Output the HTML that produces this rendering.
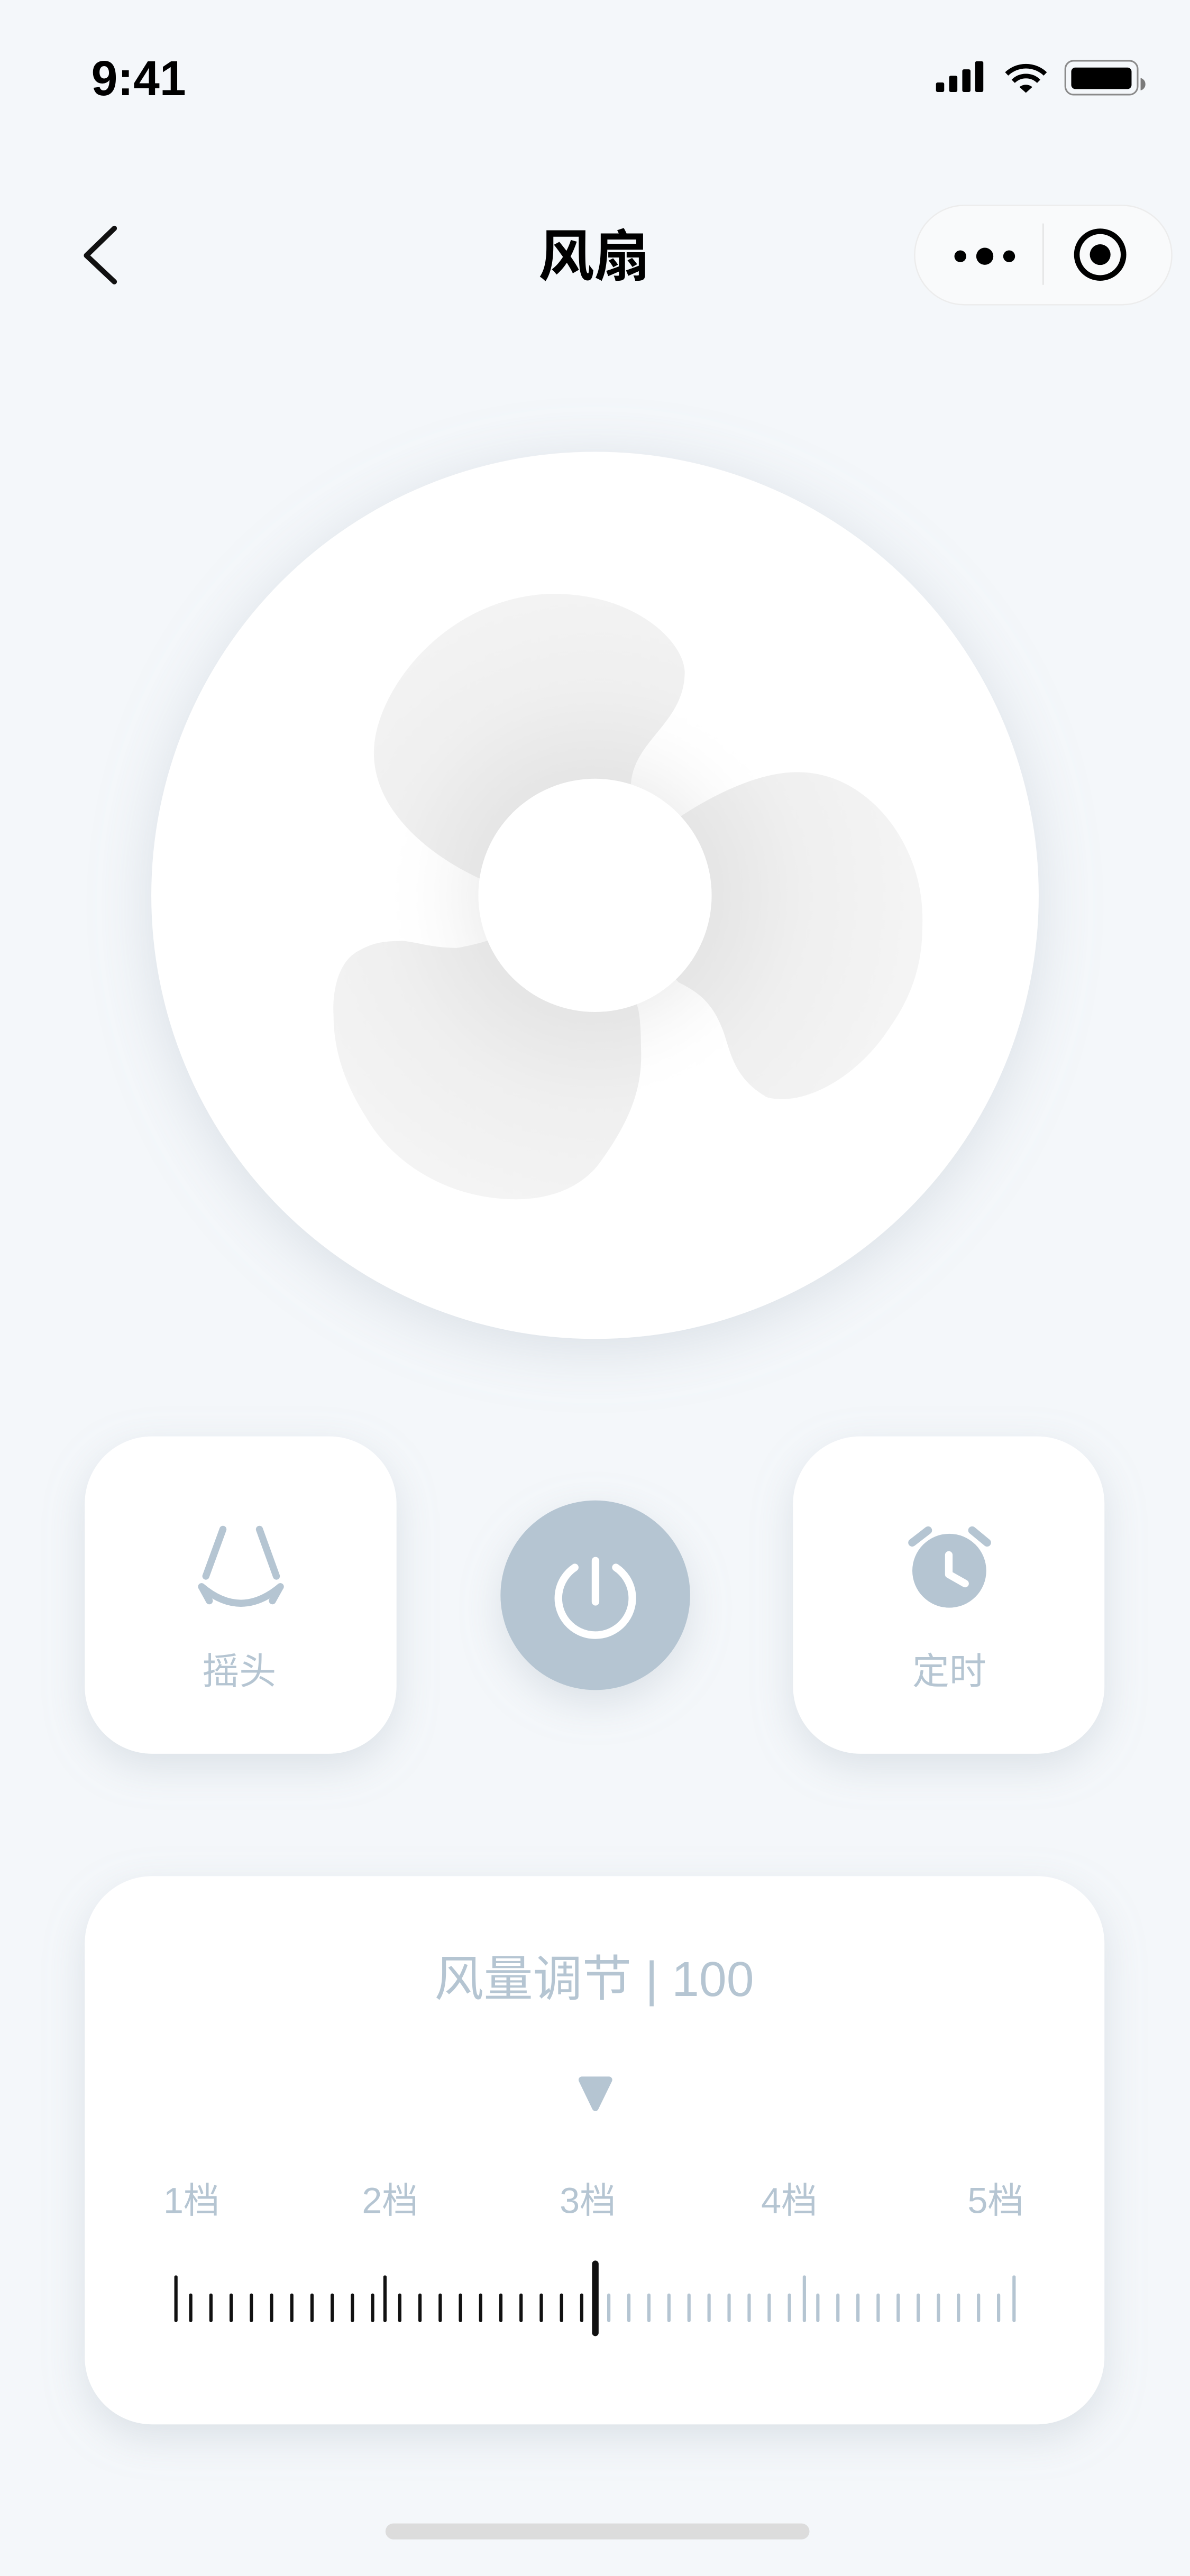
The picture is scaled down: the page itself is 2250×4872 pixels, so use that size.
<!DOCTYPE html>
<html><head><meta charset="utf-8"><style>
html,body{margin:0;padding:0;background:#f4f7fa;}
svg{display:block;}
text{font-family:"Liberation Sans","Noto Sans CJK SC",sans-serif;}
</style></head><body>
<svg width="2250" height="4872" viewBox="0 0 724 1568" xmlns="http://www.w3.org/2000/svg">
<defs>
<filter id="sh" x="-30%" y="-30%" width="160%" height="160%">
<feDropShadow dx="0" dy="8" stdDeviation="12" flood-color="#9aa8b6" flood-opacity="0.28"/>
</filter>
<filter id="shb" x="-30%" y="-30%" width="160%" height="160%">
<feDropShadow dx="0" dy="6" stdDeviation="18" flood-color="#9aa8b6" flood-opacity="0.3"/>
</filter>
<radialGradient id="bl" cx="362" cy="545" r="210" gradientUnits="userSpaceOnUse">
<stop offset="0.33" stop-color="#e5e5e5"/>
<stop offset="0.6" stop-color="#efefef"/>
<stop offset="1" stop-color="#f5f5f5"/>
</radialGradient>
<radialGradient id="glow" cx="362" cy="545" r="130" gradientUnits="userSpaceOnUse">
<stop offset="0.5" stop-color="#f0f0f0"/>
<stop offset="1" stop-color="#ffffff" stop-opacity="0"/>
</radialGradient>
</defs>
<rect width="724" height="1568" fill="#f4f7fa"/>

<text x="55.5" y="58" font-size="30" font-weight="bold" fill="#000" textLength="57.6" lengthAdjust="spacingAndGlyphs">9:41</text>
<rect x="569.5" y="50.2" width="5" height="5.8" rx="1" fill="#000"/>
<rect x="577.5" y="46.1" width="5" height="9.9" rx="1" fill="#000"/>
<rect x="585.5" y="42.2" width="5" height="13.8" rx="1" fill="#000"/>
<rect x="593.3" y="37.3" width="5" height="18.7" rx="1" fill="#000"/>
<path d="M612.5,45 A17,17 0 0 1 636,45" fill="none" stroke="#000" stroke-width="2.8"/>
<path d="M616.5,49.5 A11,11 0 0 1 632,49.5" fill="none" stroke="#000" stroke-width="2.8"/>
<path d="M620.3,53 A6,6 0 0 1 628.1,53 L624.2,56.5 Z" fill="#000"/>
<rect x="648.2" y="37" width="44" height="20.6" rx="5" fill="none" stroke="#8a8a8a" stroke-width="1"/>
<rect x="651.8" y="41.1" width="36.7" height="13.1" rx="2.5" fill="#000"/>
<path d="M694,47.5 A3.5,3.8 0 0 1 694,55 Z" fill="#7a7a7a"/>

<polyline points="69.5,139 52.5,155.5 69.5,171.5" fill="none" stroke="#111" stroke-width="3.2" stroke-linecap="round" stroke-linejoin="round"/>
<text x="361.5" y="168" font-size="34" font-weight="bold" fill="#000" text-anchor="middle">风扇</text>
<rect x="556.5" y="125" width="156.5" height="60.5" rx="30.25" fill="#f9fafb" stroke="#ececec" stroke-width="0.8"/>
<circle cx="584.3" cy="156" r="3.6" fill="#000"/>
<circle cx="599.2" cy="156" r="5.2" fill="#000"/>
<circle cx="614" cy="156" r="3.6" fill="#000"/>
<line x1="634.7" y1="136" x2="634.7" y2="173.4" stroke="#e2e2e2" stroke-width="0.8"/>
<circle cx="669.4" cy="155" r="14.2" fill="none" stroke="#000" stroke-width="3.4"/>
<circle cx="669.4" cy="155" r="6.3" fill="#000"/>

<circle cx="362" cy="545" r="270" fill="#fff" filter="url(#shb)"/>
<circle cx="362" cy="545" r="130" fill="url(#glow)"/>
<path d="M291.5,534.6 C260,520 226,492 227.5,456 C229,420 270,365 333,361.5 C385,360 416,390 416.6,409 C416.5,440 386,450 383.9,476.8 L362,545 Z" fill="url(#bl)"/>
<path d="M414.7,496.5 C440,480 465,470 485,470 C515,470 535,490 545,505 C558,525 562,545 561.2,565 C561,600 545,620 537.8,630.7 C520,655 495,669 476.2,669 C470,669 466,668 465.2,667 C445,655 444,637 439.3,625.8 C433,610 425,604 413,598 L362,545 Z" fill="url(#bl)"/>
<path d="M296,572.8 C285,576 278,577 278,577 C260,577 250,572 242,572.8 C230,573 225,575 217.7,579 C205,586 202,605 202.9,618.4 C203,640 210,660 222.6,679.9 C240,710 275,730 313.7,730 C345,730 360,715 365.4,707 C385,680 391,660 390,638 C390,625 389,615 387.6,612 L362,545 Z" fill="url(#bl)"/>
<circle cx="362" cy="545" r="71" fill="#fff"/>

<rect x="51.5" y="874.3" width="189.7" height="193.2" rx="41" fill="#fff" filter="url(#sh)"/>
<rect x="482.5" y="874.3" width="189.5" height="193.2" rx="41" fill="#fff" filter="url(#sh)"/>
<circle cx="362.2" cy="971" r="57.7" fill="#b5c5d2" filter="url(#sh)"/>
<line x1="362.3" y1="950" x2="362.3" y2="975" stroke="#fff" stroke-width="4.6" stroke-linecap="round"/>
<path d="M349.7,954.1 A22.5,22.5 0 1 0 374.7,954.1" fill="none" stroke="#fff" stroke-width="4.6" stroke-linecap="round"/>

<g stroke="#b5c5d2" stroke-width="4.3" stroke-linecap="round" fill="none">
<line x1="135.6" y1="930.9" x2="125.2" y2="959.4"/>
<line x1="157.8" y1="930.9" x2="168.1" y2="959.4"/>
<path d="M122.6,965.8 Q146.5,986 170.5,965.8"/>
<line x1="122.6" y1="965.8" x2="127.3" y2="974.4"/>
<line x1="170.5" y1="965.8" x2="165.7" y2="974.4"/>
</g>
<text x="145.5" y="1025" font-size="22.5" fill="#b5c5d2" text-anchor="middle">摇头</text>

<g stroke="#b5c5d2" stroke-width="4.8" stroke-linecap="round">
<line x1="555" y1="939" x2="564.7" y2="931.5"/>
<line x1="591.5" y1="931.5" x2="600.6" y2="939"/>
</g>
<circle cx="577.6" cy="956.1" r="22.5" fill="#b5c5d2"/>
<polyline points="577.3,946.5 577.3,958.3 587.2,963.9" fill="none" stroke="#fff" stroke-width="4.6" stroke-linecap="round" stroke-linejoin="round"/>
<text x="577.6" y="1025" font-size="22.5" fill="#b5c5d2" text-anchor="middle">定时</text>

<rect x="51.5" y="1142" width="620.5" height="333.7" rx="41" fill="#fff" filter="url(#sh)"/>
<text x="361.5" y="1215" font-size="30" fill="#b5c5d2" text-anchor="middle">风量调节 | 100</text>
<polygon points="354,1266 370.5,1266 362.2,1283" fill="#b5c5d2" stroke="#b5c5d2" stroke-width="4" stroke-linejoin="round"/>
<g font-size="22" fill="#b5c5d2" text-anchor="middle">
<text x="116.5" y="1347">1档</text>
<text x="237.3" y="1347">2档</text>
<text x="357.6" y="1347">3档</text>
<text x="480.2" y="1347">4档</text>
<text x="605.8" y="1347">5档</text>
</g>
<g stroke-width="2" stroke-linecap="round">
<g stroke="#111">
<line x1="107" y1="1386" x2="107" y2="1412.5"/>
<line x1="116" y1="1397" x2="116" y2="1412.5"/><line x1="128.3" y1="1397" x2="128.3" y2="1412.5"/><line x1="140.6" y1="1397" x2="140.6" y2="1412.5"/><line x1="152.9" y1="1397" x2="152.9" y2="1412.5"/><line x1="165.2" y1="1397" x2="165.2" y2="1412.5"/><line x1="177.5" y1="1397" x2="177.5" y2="1412.5"/><line x1="189.8" y1="1397" x2="189.8" y2="1412.5"/><line x1="202.1" y1="1397" x2="202.1" y2="1412.5"/><line x1="214.4" y1="1397" x2="214.4" y2="1412.5"/><line x1="226.7" y1="1397" x2="226.7" y2="1412.5"/>
<line x1="234.2" y1="1386" x2="234.2" y2="1412.5"/>
<line x1="243.2" y1="1397" x2="243.2" y2="1412.5"/><line x1="255.5" y1="1397" x2="255.5" y2="1412.5"/><line x1="267.8" y1="1397" x2="267.8" y2="1412.5"/><line x1="280.1" y1="1397" x2="280.1" y2="1412.5"/><line x1="292.4" y1="1397" x2="292.4" y2="1412.5"/><line x1="304.7" y1="1397" x2="304.7" y2="1412.5"/><line x1="317" y1="1397" x2="317" y2="1412.5"/><line x1="329.3" y1="1397" x2="329.3" y2="1412.5"/><line x1="341.6" y1="1397" x2="341.6" y2="1412.5"/><line x1="353.9" y1="1397" x2="353.9" y2="1412.5"/>
</g>
<g stroke="#b5c5d2">
<line x1="370.4" y1="1397" x2="370.4" y2="1412.5"/><line x1="382.6" y1="1397" x2="382.6" y2="1412.5"/><line x1="394.8" y1="1397" x2="394.8" y2="1412.5"/><line x1="407" y1="1397" x2="407" y2="1412.5"/><line x1="419.2" y1="1397" x2="419.2" y2="1412.5"/><line x1="431.4" y1="1397" x2="431.4" y2="1412.5"/><line x1="443.6" y1="1397" x2="443.6" y2="1412.5"/><line x1="455.8" y1="1397" x2="455.8" y2="1412.5"/><line x1="468" y1="1397" x2="468" y2="1412.5"/><line x1="480.3" y1="1397" x2="480.3" y2="1412.5"/>
<line x1="489.4" y1="1386" x2="489.4" y2="1412.5"/>
<line x1="497.6" y1="1397" x2="497.6" y2="1412.5"/><line x1="509.8" y1="1397" x2="509.8" y2="1412.5"/><line x1="522" y1="1397" x2="522" y2="1412.5"/><line x1="534.3" y1="1397" x2="534.3" y2="1412.5"/><line x1="546.5" y1="1397" x2="546.5" y2="1412.5"/><line x1="558.7" y1="1397" x2="558.7" y2="1412.5"/><line x1="571" y1="1397" x2="571" y2="1412.5"/><line x1="583.2" y1="1397" x2="583.2" y2="1412.5"/><line x1="595.4" y1="1397" x2="595.4" y2="1412.5"/><line x1="607.6" y1="1397" x2="607.6" y2="1412.5"/>
<line x1="617" y1="1386" x2="617" y2="1412.5"/>
</g>
<line x1="362.2" y1="1378" x2="362.2" y2="1420" stroke="#111" stroke-width="4"/>
</g>

<rect x="234.5" y="1536" width="258" height="9.7" rx="4.85" fill="#dcdcdc"/>
</svg>
</body></html>
